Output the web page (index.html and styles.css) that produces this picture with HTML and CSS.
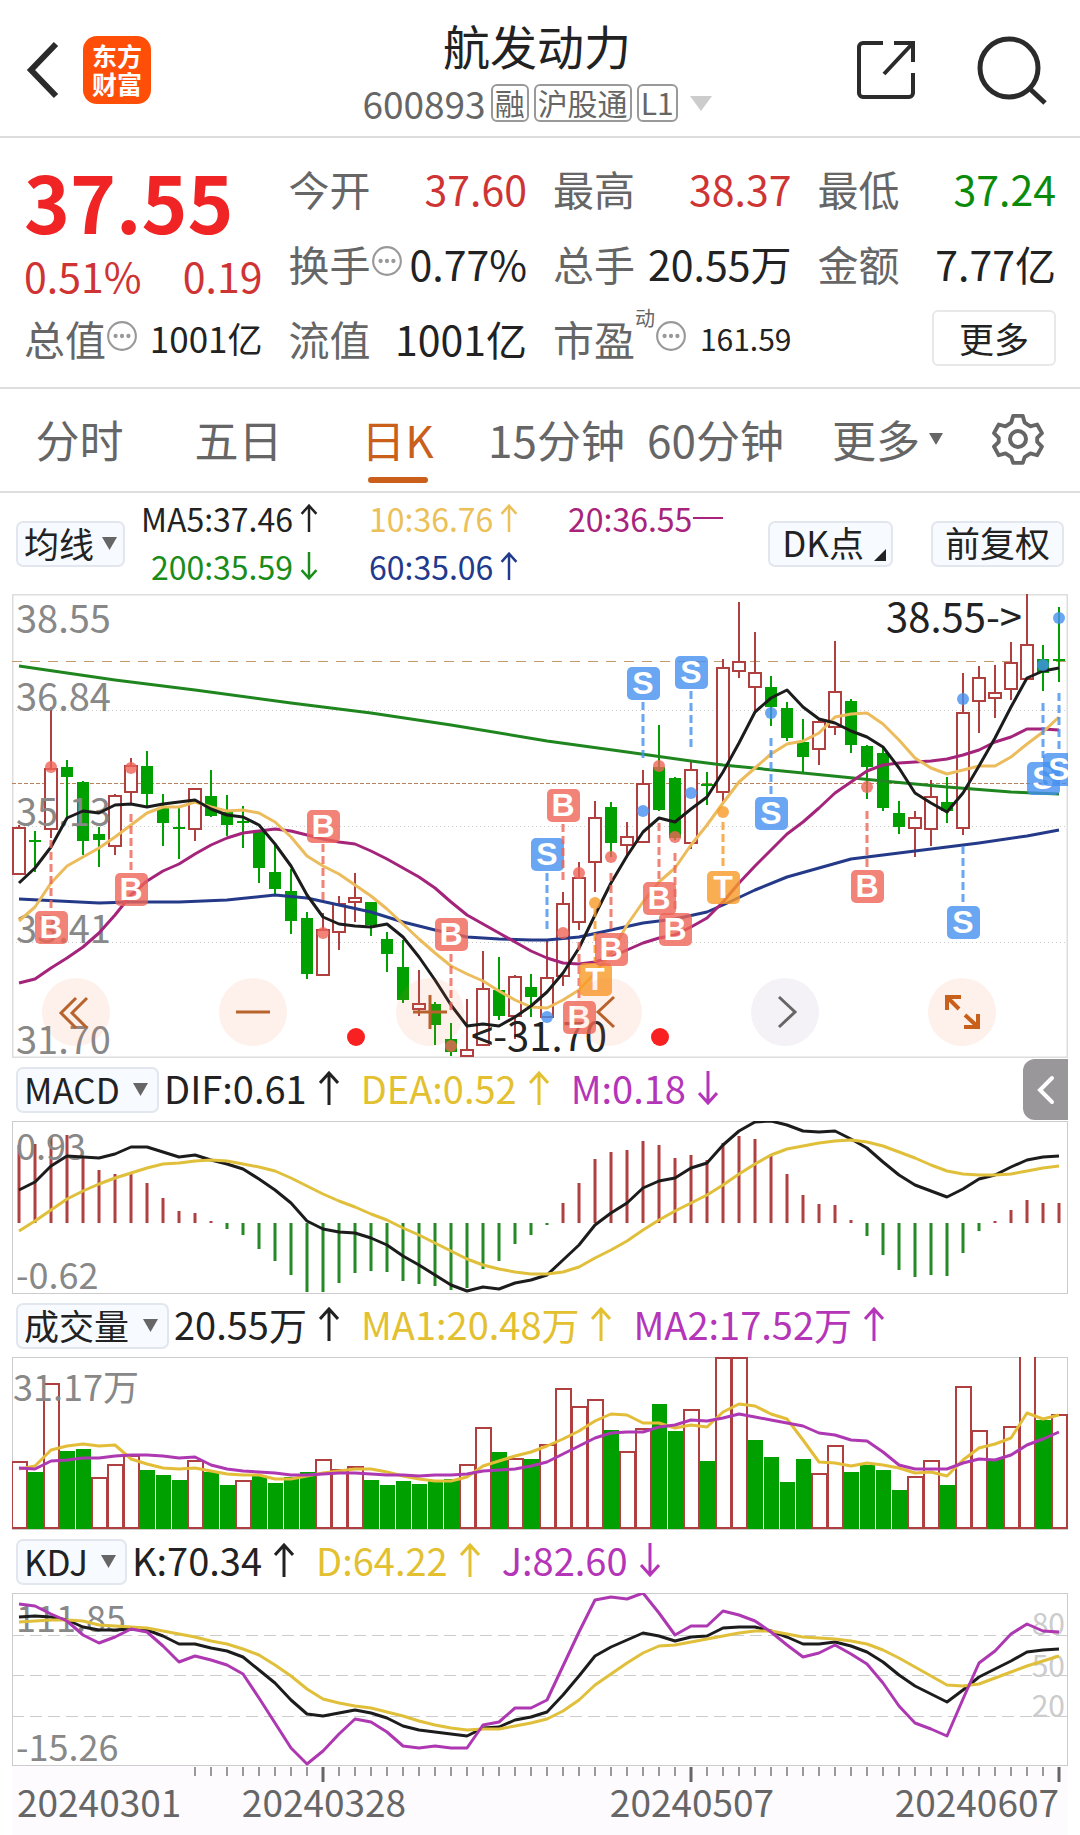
FILE: index.html
```html
<!DOCTYPE html>
<html lang="zh-CN">
  <head>
    <meta charset="UTF-8" />
    <meta name="viewport" content="width=device-width, initial-scale=1.0" />
    <title>航发动力 600893</title>
    <link rel="stylesheet" href="styles.css">
  </head>
  <body>
    <header class="topbar">
      <div class="topbar-left">
        <a class="icon-link" href="#" aria-label="返回">
          <svg width="34" height="58" viewBox="0 0 34 58"><path d="M30 3 5 29l25 26" fill="none" stroke="#2b2b2b" stroke-width="6" /></svg>
        </a>
        <a class="logo" href="#">东方<br>财富</a>
      </div>
      <div class="topbar-title">
        <h1>航发动力</h1>
        <div class="stock-code">
          <span>600893</span>
          <span class="tag">融</span>
          <span class="tag">沪股通</span>
          <span class="tag">L1</span>
          <svg class="code-arrow" width="22" height="15" viewBox="0 0 22 15"><path d="M0 0h22L11 15z" fill="#ccc" /></svg>
        </div>
      </div>
      <div class="topbar-right">
        <a class="icon-link" href="#" aria-label="分享">
          <svg width="62" height="60" viewBox="0 0 62 60" fill="none" stroke="#2b2b2b" stroke-width="4">
            <path d="M27 3H7a4 4 0 0 0-4 4v46a4 4 0 0 0 4 4h46a4 4 0 0 0 4-4V33M38 3h19v19M57 3 28 34" />
          </svg>
        </a>
        <a class="icon-link" href="#" aria-label="搜索">
          <svg width="72" height="70" viewBox="0 0 72 70" fill="none" stroke="#2b2b2b" stroke-width="5">
            <circle cx="33" cy="33" r="29" /><path d="m53 53 16 15" />
          </svg>
        </a>
      </div>
    </header>

    <section class="quote">
      <div class="price-box">
        <div class="price">37.55</div>
        <div class="change"><span>0.51%</span><span>0.19</span></div>
      </div>
      <div class="cell"><span class="name">今开</span><span class="up">37.60</span></div>
      <div class="cell"><span class="name">最高</span><span class="up">38.37</span></div>
      <div class="cell"><span class="name">最低</span><span class="down">37.24</span></div>
      <div class="cell"><span class="name">换手<svg class="dots" viewBox="0 0 30 30"><use href="#dots" /></svg></span><span>0.77%</span></div>
      <div class="cell"><span class="name">总手</span><span>20.55万</span></div>
      <div class="cell"><span class="name">金额</span><span>7.77亿</span></div>
      <div class="cell"><span class="name">总值<svg class="dots" viewBox="0 0 30 30"><use href="#dots" /></svg></span><span class="medium">1001亿</span></div>
      <div class="cell"><span class="name">流值</span><span>1001亿</span></div>
      <div class="cell"><span class="name">市盈<sup>动</sup><svg class="dots" viewBox="0 0 30 30"><use href="#dots" /></svg></span><span class="small">161.59</span></div>
      <div class="cell cell-more"><button class="more-btn" type="button">更多</button></div>
    </section>

    <nav class="tabs">
      <a href="#">分时</a>
      <a href="#">五日</a>
      <a href="#" class="active">日K</a>
      <a href="#">15分钟</a>
      <a href="#">60分钟</a>
      <button type="button">更多<svg width="14" height="14" viewBox="0 0 14 14"><path d="M0 1h14L7 13z" fill="#666" /></svg></button>
      <button type="button" aria-label="设置">
        <svg width="52" height="54" viewBox="0 0 52 54" fill="none" stroke="#666" stroke-width="4" stroke-linejoin="round">
          <path d="M21 3h10l2 7 6 4 7-2 5 9-5 5v4l5 5-5 9-7-2-6 4-2 6H21l-2-6-6-4-7 2-5-9 5-5v-4l-5-5 5-9 7 2 6-4z" transform="translate(1 1) scale(.96)" />
          <circle cx="26" cy="27" r="8" />
        </svg>
      </button>
    </nav>

    <main>
      <div class="ma-bar">
        <label class="picker"><select aria-label="主图指标"><option>均线</option></select><svg viewBox="0 0 14 14"><use href="#tri" /></svg></label>
        <div class="ma-values">
          <span class="black">MA5:37.46<svg class="arrow"><use href="#arrow-up" /></svg></span>
          <span class="yellow">10:36.76<svg class="arrow"><use href="#arrow-up" /></svg></span>
          <span class="plum">20:36.55<svg class="arrow flat"><use href="#flat" /></svg></span>
          <span class="green">200:35.59<svg class="arrow"><use href="#arrow-down" /></svg></span>
          <span class="blue">60:35.06<svg class="arrow"><use href="#arrow-up" /></svg></span>
        </div>
        <button class="box-btn dk-btn" type="button">DK点<svg width="12" height="12" viewBox="0 0 12 12"><path d="M12 0v12H0z" fill="#222" /></svg></button>
        <button class="box-btn" type="button">前复权</button>
      </div>

      <div class="kline">
        <svg id="klineChart" class="chart" viewBox="0 0 1056 464"></svg>
        <div class="tools">
          <button type="button" aria-label="最左"><svg viewBox="0 0 68 68"><path d="M34 20 19 35l15 15M45 20 30 35l15 15" /></svg></button>
          <button type="button" aria-label="缩小"><svg viewBox="0 0 68 68"><path d="M17 34h34" /></svg></button>
          <button type="button" aria-label="放大"><svg viewBox="0 0 68 68"><path d="M17 34h34M34 17v34" /></svg></button>
          <button type="button" aria-label="左移"><svg viewBox="0 0 68 68"><path d="M40 19 24 34l16 15" /></svg></button>
          <button type="button" aria-label="右移" class="gray"><svg viewBox="0 0 68 68"><path d="m28 19 16 15-16 15" /></svg></button>
          <button type="button" aria-label="全屏" class="full"><svg viewBox="0 0 68 68"><path d="M19 32V19h14M20 20l11 11M50 36v13H36M49 48 37 37" /></svg></button>
        </div>
      </div>

      <div class="indicator-bar">
        <label class="picker"><select aria-label="副图一"><option>MACD</option></select><svg viewBox="0 0 14 14"><use href="#tri" /></svg></label>
        <span class="black">DIF:0.61<svg class="arrow"><use href="#arrow-up" /></svg></span>
        <span class="gold">DEA:0.52<svg class="arrow"><use href="#arrow-up" /></svg></span>
        <span class="purple">M:0.18<svg class="arrow"><use href="#arrow-down" /></svg></span>
        <button class="side-btn" type="button" aria-label="展开"><svg width="18" height="30" viewBox="0 0 18 30"><path d="M15 3 3 15l12 12" fill="none" stroke="#fff" stroke-width="4" stroke-linecap="round" /></svg></button>
      </div>
      <svg id="macdChart" class="chart" viewBox="0 0 1056 173"></svg>

      <div class="indicator-bar">
        <label class="picker"><select aria-label="副图二"><option>成交量</option></select><svg viewBox="0 0 14 14"><use href="#tri" /></svg></label>
        <span class="black">20.55万<svg class="arrow"><use href="#arrow-up" /></svg></span>
        <span class="gold">MA1:20.48万<svg class="arrow"><use href="#arrow-up" /></svg></span>
        <span class="purple">MA2:17.52万<svg class="arrow"><use href="#arrow-up" /></svg></span>
      </div>
      <svg id="volumeChart" class="chart" viewBox="0 0 1056 173"></svg>

      <div class="indicator-bar">
        <label class="picker"><select aria-label="副图三"><option>KDJ</option></select><svg viewBox="0 0 14 14"><use href="#tri" /></svg></label>
        <span class="black">K:70.34<svg class="arrow"><use href="#arrow-up" /></svg></span>
        <span class="gold">D:64.22<svg class="arrow"><use href="#arrow-up" /></svg></span>
        <span class="purple">J:82.60<svg class="arrow"><use href="#arrow-down" /></svg></span>
      </div>
      <svg id="kdjChart" class="chart" viewBox="0 0 1056 173"></svg>
      <svg id="dateAxis" class="chart axis" viewBox="0 0 1056 70"></svg>
    </main>

    <!-- shared icons -->
    <svg class="symbols" aria-hidden="true">
      <symbol id="dots" viewBox="0 0 30 30">
        <circle cx="15" cy="15" r="13" fill="none" stroke="#999" stroke-width="2" />
        <circle cx="9" cy="15" r="2" fill="#999" /><circle cx="15" cy="15" r="2" fill="#999" /><circle cx="21" cy="15" r="2" fill="#999" />
      </symbol>
      <symbol id="tri" viewBox="0 0 14 14"><path d="M0 1h14L7 13z" fill="#666" /></symbol>
      <symbol id="arrow-up" viewBox="0 0 20 34"><path d="M10 34V2M1 12l9-10 9 10" fill="none" stroke="currentColor" stroke-width="3" /></symbol>
      <symbol id="arrow-down" viewBox="0 0 20 34"><path d="M10 0v32M1 22l9 10 9-10" fill="none" stroke="currentColor" stroke-width="3" /></symbol>
      <symbol id="flat" viewBox="0 0 30 28"><path d="M0 14h30" stroke="currentColor" stroke-width="2" /></symbol>
    </svg>

    <script src="charts.js"></script>
  </body>
</html>
```
FILE: styles.css
```css
* {
  box-sizing: border-box;
}

body {
  margin: 0;
  background: #fff;
  color: #222;
  font-family: "Noto Sans CJK SC", sans-serif;
}

a {
  color: inherit;
  text-decoration: none;
}

button,
select {
  margin: 0;
  padding: 0;
  border: none;
  background: none;
  color: inherit;
  font: inherit;
  cursor: pointer;
}

svg {
  flex: none;
}

.symbols {
  position: absolute;
  width: 0;
  height: 0;
}

/* header */
.topbar {
  display: grid;
  grid-template-columns: 1fr auto 1fr;
  height: 138px;
  padding: 0 32px 0 26px;
  border-bottom: 2px solid #ddd;
}

.topbar-left,
.topbar-right {
  display: flex;
  align-items: center;
  padding-top: 4px;
}

.topbar-left {
  gap: 23px;
}

.topbar-right {
  justify-content: flex-end;
  gap: 58px;
}

.icon-link {
  display: flex;
}

.logo {
  width: 68px;
  height: 68px;
  padding: 5px 0;
  border-radius: 14px;
  background: #ff4e08;
  color: #fff;
  font-size: 25px;
  font-weight: 700;
  line-height: 28px;
  text-align: center;
}

.topbar-title {
  display: flex;
  flex-direction: column;
  align-items: center;
  padding-top: 15px;
}

h1 {
  margin: 0;
  font-size: 47px;
  font-weight: 400;
  line-height: 60px;
}

.stock-code {
  display: flex;
  align-items: center;
  gap: 5px;
  color: #666;
  font-size: 37px;
  line-height: 56px;
}

.tag {
  height: 38px;
  padding: 0 2px;
  border: 2px solid #999;
  border-radius: 6px;
  font-size: 30px;
  line-height: 32px;
}

.code-arrow {
  margin-left: 7px;
}

/* quote numbers */
.quote {
  display: grid;
  grid-template-columns: repeat(4, 1fr);
  grid-auto-rows: 75px;
  column-gap: 26px;
  padding: 12px 24px;
  border-bottom: 2px solid #ddd;
}

.price-box {
  grid-row: span 2;
}

.price {
  color: #f02424;
  font-size: 78px;
  font-weight: 700;
  line-height: 100px;
}

.change {
  display: flex;
  justify-content: space-between;
  color: #cf3434;
  font-size: 41px;
  line-height: 50px;
}

.cell {
  display: flex;
  align-items: center;
  justify-content: space-between;
  font-size: 41px;
  white-space: nowrap;
}

.name {
  display: flex;
  align-items: center;
  color: #666;
}

.name sup {
  align-self: flex-start;
  font-size: 20px;
  line-height: 20px;
}

.dots {
  width: 32px;
  height: 32px;
  margin-bottom: 4px;
}

.up {
  color: #cf3434;
}

.down {
  color: #0a8c0a;
}

.medium {
  font-size: 35px;
}

.small {
  font-size: 30px;
}

.cell-more {
  justify-content: flex-end;
}

.more-btn {
  width: 124px;
  height: 56px;
  border: 2px solid #e8e8e8;
  border-radius: 6px;
  font-size: 35px;
  line-height: 46px;
}

/* period tabs */
.tabs {
  display: grid;
  grid-template-columns: repeat(5, 159fr) 185fr 76fr;
  height: 104px;
  padding-right: 24px;
  border-bottom: 2px solid #ddd;
  color: #666;
  font-size: 44px;
}

.tabs a,
.tabs button {
  display: flex;
  align-items: center;
  justify-content: center;
  gap: 9px;
  padding-bottom: 2px;
  white-space: nowrap;
}

.tabs .active {
  position: relative;
  color: #c95f1b;
}

.tabs .active::after {
  content: "";
  position: absolute;
  bottom: 8px;
  width: 60px;
  height: 6px;
  border-radius: 3px;
  background: #c95f1b;
}

/* moving averages */
main {
  padding: 0 12px;
}

.ma-bar {
  display: flex;
  align-items: center;
  height: 101px;
  padding: 0 4px;
}

.picker,
.box-btn {
  display: flex;
  align-items: center;
  height: 46px;
  border: 2px solid #e2e6ee;
  border-radius: 7px;
  background: #f7faff;
  font-size: 35px;
  line-height: 40px;
  white-space: nowrap;
}

.picker {
  gap: 7px;
  padding: 0 6px;
}

.picker select {
  height: 42px;
  padding-bottom: 4px;
  appearance: none;
}

.picker svg {
  width: 15px;
  height: 15px;
}

.ma-values {
  display: grid;
  grid-template-columns: 179px 148px auto;
  column-gap: 51px;
  flex: 1;
  padding: 0 0 4px 14px;
  font-size: 32px;
  line-height: 48px;
}

.ma-values span {
  display: flex;
  align-items: center;
  gap: 7px;
}

.ma-values .black,
.ma-values .green {
  justify-content: flex-end;
}

.ma-values .arrow {
  width: 18px;
  height: 28px;
}

.ma-values .flat {
  width: 30px;
  margin-left: -6px;
}

.box-btn {
  padding: 0 12px 4px;
}

.dk-btn {
  gap: 10px;
  margin-right: 38px;
  padding-right: 5px;
}

.dk-btn svg {
  align-self: flex-end;
}

.black {
  color: #222;
}

.yellow {
  color: #ecc058;
}

.plum {
  color: #a8237c;
}

.green {
  color: #1a8c1a;
}

.blue {
  color: #223a8c;
}

.gold {
  color: #e3c02f;
}

.purple {
  color: #b435b8;
}

/* charts */
.chart {
  display: block;
  width: 100%;
  height: auto;
}

.chart text {
  fill: #888;
  font-size: 36px;
}

.chart .level {
  fill: #ccc;
  font-size: 30px;
  text-anchor: end;
}

.axis {
  background: #fdfbfe;
}

.axis text {
  fill: #666;
  font-size: 37px;
}

.kline {
  position: relative;
}

.kline .chart text {
  font-size: 38px;
}

.kline .chart .note {
  fill: #222;
  font-size: 40px;
}

.kline .chart .badge-letter {
  fill: #fff;
  font-family: "Liberation Sans", Arial, sans-serif;
  font-size: 32px;
  font-weight: 700;
  text-anchor: middle;
}

.tools {
  position: absolute;
  right: 0;
  bottom: 12px;
  left: 0;
  display: flex;
  justify-content: space-between;
  padding: 0 72px 0 30px;
}

.tools button {
  width: 68px;
  height: 68px;
  border-radius: 50%;
  background: rgba(250, 120, 70, 0.1);
}

.tools svg {
  display: block;
  fill: none;
  stroke: #b8622c;
  stroke-width: 3;
}

.tools .full svg {
  stroke: #c8601c;
  stroke-width: 4;
}

.tools .gray {
  background: #f5f2f7;
}

.tools .gray svg {
  stroke: #666;
}

.indicator-bar {
  display: flex;
  align-items: center;
  height: 63px;
  padding-left: 4px;
  font-size: 38px;
}

.indicator-bar .picker {
  gap: 13px;
  margin-right: 5px;
  padding-right: 9px;
}

.indicator-bar span {
  display: flex;
  align-items: center;
  gap: 12px;
  margin-right: 22px;
  padding-bottom: 4px;
}

.indicator-bar .arrow {
  width: 20px;
  height: 34px;
}

.side-btn {
  display: flex;
  align-items: center;
  justify-content: center;
  width: 45px;
  height: 61px;
  margin-left: auto;
  border-radius: 12px 0 0 12px;
  background: #999799;
}
```
FILE: charts.js
```js
const RED = "#b04040";
const GREEN = "#00a000";
const STEP = 16;

// color, high, body top, body bottom, low
const candles = [
  ["r", 231, 234, 280, 280], ["g", 237, 246, 247, 278], ["r", 113, 175, 235, 244], ["g", 166, 173, 183, 226],
  ["g", 187, 188, 247, 261], ["g", 233, 240, 246, 273], ["r", 200, 202, 252, 261], ["r", 164, 172, 198, 209],
  ["g", 157, 172, 200, 213], ["g", 200, 214, 229, 252], ["g", 214, 233, 234, 265], ["r", 194, 195, 235, 247],
  ["g", 176, 202, 222, 223], ["g", 201, 218, 231, 242], ["g", 212, 227, 228, 254], ["g", 236, 237, 274, 289],
  ["g", 249, 278, 295, 300], ["g", 275, 297, 327, 340], ["g", 318, 324, 380, 385], ["r", 319, 336, 381, 382],
  ["r", 302, 310, 338, 356], ["r", 279, 304, 308, 328], ["g", 308, 308, 331, 342], ["g", 338, 345, 360, 378],
  ["g", 346, 373, 406, 409], ["r", 376, 410, 415, 422], ["g", 408, 410, 431, 451], ["g", 429, 445, 458, 462],
  ["r", 405, 456, 462, 463], ["r", 357, 395, 451, 451], ["g", 363, 396, 422, 426], ["r", 381, 383, 422, 445],
  ["g", 380, 393, 403, 423], ["r", 347, 384, 423, 423], ["r", 298, 310, 382, 392], ["r", 268, 284, 328, 336],
  ["r", 207, 224, 268, 298], ["g", 208, 213, 249, 263], ["r", 228, 243, 251, 262], ["r", 176, 190, 248, 249],
  ["g", 131, 173, 216, 217], ["g", 183, 184, 244, 246], ["r", 168, 176, 249, 255], ["g", 178, 190, 191, 211],
  ["r", 65, 74, 198, 209], ["r", 8, 68, 77, 84], ["r", 38, 79, 93, 119], ["g", 82, 93, 113, 132],
  ["g", 108, 114, 144, 147], ["g", 125, 148, 163, 179], ["r", 126, 128, 155, 171], ["r", 47, 98, 133, 141],
  ["g", 105, 107, 151, 159], ["g", 151, 152, 173, 205], ["g", 154, 159, 214, 217], ["g", 207, 219, 233, 240],
  ["r", 217, 224, 234, 263], ["r", 186, 203, 235, 252], ["g", 183, 208, 217, 229], ["r", 79, 119, 234, 241],
  ["r", 72, 84, 107, 139], ["r", 71, 99, 104, 124], ["r", 48, 69, 95, 106], ["r", 0, 51, 85, 85],
  ["g", 51, 65, 79, 97], ["g", 13, 65, 67, 88],
];

const ma5 = [289, 274, 253, 224, 217, 219, 211, 210, 213, 210, 208, 206, 215, 221, 223, 231, 250, 272, 301, 323, 330, 332, 333, 330, 343, 363, 386, 411, 432, 430, 432, 423, 412, 398, 379, 354, 321, 289, 262, 238, 224, 228, 215, 203, 178, 149, 118, 104, 96, 113, 125, 129, 137, 143, 153, 174, 199, 209, 218, 199, 172, 144, 113, 84, 77, 74];
const ma10 = [327, 313, 289, 272, 263, 254, 243, 231, 219, 213, 213, 208, 213, 217, 216, 219, 228, 243, 262, 272, 280, 291, 302, 315, 330, 345, 359, 372, 380, 387, 397, 406, 413, 414, 406, 396, 379, 359, 331, 308, 288, 274, 251, 231, 209, 188, 174, 160, 150, 147, 139, 123, 120, 119, 130, 146, 164, 174, 180, 176, 172, 172, 163, 150, 138, 123];
const ma20 = [389, 385, 374, 364, 353, 339, 321, 301, 287, 277, 270, 260, 251, 244, 239, 237, 235, 237, 241, 245, 248, 250, 257, 265, 274, 283, 294, 308, 321, 330, 339, 348, 357, 364, 369, 370, 368, 363, 356, 349, 344, 341, 333, 324, 308, 289, 272, 256, 240, 228, 214, 199, 188, 177, 171, 169, 168, 167, 165, 161, 156, 148, 143, 135, 135, 136];
// slow averages: [index, y]
const ma60 = [[0, 305], [5, 309], [7, 308], [10, 308], [13, 306], [16, 301], [18, 304], [20, 311], [22, 318], [24, 328], [26, 336], [28, 343], [30, 345], [32, 346], [33, 346], [35, 343], [37, 336], [39, 329], [41, 325], [43, 318], [44, 311], [46, 296], [48, 283], [50, 274], [52, 265], [54, 261], [56, 257], [58, 253], [60, 249], [63, 242], [65, 236]];
const ma200 = [[0, 72], [6, 86], [11, 96], [17, 109], [22, 119], [27, 131], [33, 147], [38, 158], [42, 167], [44, 171], [49, 179], [54, 187], [58, 193], [62, 198], [65, 200]];

// letter, index, badge y, dash start, dash end, dot y
const trades = [
  ["B", 2, 333, 246, 314, 173], ["B", 7, 295, 220, 276, 174], ["B", 19, 232, 250, 308, 339], ["B", 27, 340, 360, 416, 452],
  ["S", 33, 260, 279, 335, 423], ["B", 34, 211, 230, 286, 339], ["B", 35, 423, 348, 404, 279], ["T", 36, 385, 315, 368, 309],
  ["B", 37, 355, 279, 336, 263], ["S", 39, 89, 108, 164, 217], ["B", 40, 304, 229, 285, 172], ["B", 41, 335, 259, 316, 243],
  ["S", 42, 78, 97, 153, 199], ["T", 44, 293, 228, 274, 218], ["S", 47, 219, 144, 200, 119], ["B", 53, 292, 217, 273, 193],
  ["S", 59, 328, 252, 309, 105], ["S", 64, 184, 109, 164, 71], ["S", 65, 175, 99, 156, 24],
];
const tradeColors = { B: "#ee6558", S: "#4590f0", T: "#fa9a28" };

const macdBars = [24, 23, 16, 14, 35, 49, 53, 53, 62, 77, 90, 92, 100, 108, 114, 128, 140, 154, 171, 171, 162, 152, 150, 151, 160, 163, 165, 169, 167, 148, 140, 123, 114, 104, 82, 62, 38, 31, 29, 20, 24, 37, 34, 39, 22, 15, 18, 33, 53, 74, 83, 84, 99, 115, 134, 149, 156, 154, 155, 132, 110, 100, 89, 79, 82, 82];
const dif = [69, 61, 45, 35, 36, 37, 33, 26, 26, 31, 36, 34, 39, 43, 48, 58, 69, 82, 100, 108, 111, 112, 117, 124, 135, 144, 154, 164, 170, 166, 168, 162, 159, 154, 139, 124, 104, 92, 82, 67, 60, 57, 47, 42, 24, 10, 1, 0, 4, 10, 11, 10, 18, 27, 41, 54, 64, 70, 76, 68, 58, 54, 46, 39, 36, 35];
const dea = [110, 100, 89, 78, 70, 63, 57, 52, 47, 43, 42, 40, 39, 40, 43, 46, 50, 57, 65, 73, 80, 86, 93, 99, 107, 114, 122, 130, 138, 144, 148, 151, 153, 153, 151, 146, 137, 129, 120, 109, 99, 90, 82, 74, 64, 53, 43, 34, 28, 25, 22, 20, 19, 21, 25, 31, 37, 44, 50, 53, 54, 54, 53, 50, 47, 45];

const volumeColors = "rgrggrrrgggrggrggggrrrggggggrrgrgrrrrgrrggrgrrggggrrggggrrgrrgrrgr";
const volumes = [105, 115, 27, 94, 92, 121, 108, 99, 113, 118, 123, 104, 115, 128, 124, 119, 126, 120, 115, 103, 113, 110, 123, 128, 124, 127, 123, 122, 108, 71, 95, 102, 102, 88, 32, 50, 43, 73, 95, 72, 47, 74, 53, 104, 1, 1, 83, 100, 125, 102, 117, 89, 115, 108, 113, 133, 120, 104, 128, 30, 74, 102, 70, -5, 63, 58];
const volMa1 = [112, 109, 93, 89, 87, 89, 88, 102, 107, 111, 112, 111, 114, 117, 118, 118, 122, 122, 119, 116, 114, 112, 112, 115, 119, 122, 124, 124, 120, 109, 104, 99, 95, 89, 82, 74, 64, 57, 58, 66, 66, 71, 68, 70, 55, 47, 49, 57, 62, 83, 105, 106, 109, 106, 108, 111, 116, 115, 119, 103, 91, 87, 81, 56, 62, 58];
const volMa2 = [111, 112, 104, 103, 101, 101, 99, 98, 98, 99, 101, 100, 108, 112, 114, 115, 116, 118, 118, 117, 116, 116, 117, 118, 118, 119, 118, 118, 117, 114, 113, 112, 109, 105, 97, 89, 81, 76, 75, 75, 70, 68, 63, 64, 61, 57, 60, 63, 66, 69, 76, 78, 83, 84, 95, 108, 112, 112, 112, 106, 102, 103, 98, 88, 82, 75];

const kLine = [24, 23, 24, 27, 34, 37, 37, 36, 37, 43, 51, 51, 55, 58, 64, 77, 90, 107, 121, 123, 120, 117, 120, 125, 133, 137, 139, 141, 143, 135, 134, 127, 124, 119, 102, 83, 63, 54, 47, 40, 43, 48, 44, 43, 35, 34, 34, 38, 44, 51, 51, 49, 53, 59, 69, 82, 93, 101, 109, 97, 84, 76, 68, 59, 57, 56];
const dLine = [29, 28, 27, 27, 28, 32, 33, 34, 35, 38, 41, 44, 48, 51, 56, 62, 72, 83, 96, 106, 110, 113, 115, 119, 123, 128, 132, 135, 137, 136, 136, 133, 130, 126, 118, 107, 92, 81, 70, 60, 53, 52, 49, 46, 43, 40, 38, 38, 41, 44, 45, 46, 48, 51, 57, 65, 74, 83, 92, 93, 91, 85, 79, 73, 68, 63];
const jLine = [11, 13, 21, 28, 42, 50, 44, 36, 39, 53, 69, 63, 67, 72, 81, 105, 130, 155, 171, 158, 141, 126, 129, 139, 153, 155, 153, 155, 155, 132, 129, 115, 115, 107, 73, 39, 7, 4, 6, 0, 20, 42, 33, 33, 18, 22, 28, 39, 52, 64, 60, 52, 61, 71, 90, 113, 130, 136, 143, 106, 70, 58, 41, 31, 38, 39];

const x = (i) => 7 + STEP * i;

function line(data, color, width = 3) {
  const points = data.map((d, i) => (Array.isArray(d) ? `${x(d[0])},${d[1]}` : `${x(i)},${d}`)).join(" ");
  return `<polyline points="${points}" fill="none" stroke="${color}" stroke-width="${width}" stroke-linejoin="round" />`;
}

function hline(y, color, dash) {
  return `<path d="M0 ${y}.5H1056" stroke="${color}" stroke-width="1" stroke-dasharray="${dash}" />`;
}

function vline(cx, y1, y2, color, width) {
  return `<path d="M${cx} ${y1}V${y2}" stroke="${color}" stroke-width="${width}" />`;
}

function frame(height, color, width = 1) {
  return `<rect x="0.5" y="0.5" width="1055" height="${height}" fill="none" stroke="${color}" stroke-width="${width}" />`;
}

function label(text, tx, ty, cls = "") {
  return `<text class="${cls}" x="${tx}" y="${ty}">${text}</text>`;
}

function drawKline() {
  let out = frame(463, "#ddd", 2);
  [116, 232, 348].forEach((y) => (out += hline(y, "#ccc", "1 3")));
  out += hline(67, "#c49a6c", "10 8") + hline(189, "#b8835c", "4 2");

  candles.forEach(([c, high, top, bottom, low], i) => {
    const cx = x(i);
    if (c === "r") {
      out += vline(cx, high, top, RED, 2) + vline(cx, bottom, low, RED, 2);
      out += `<rect x="${cx - 6}" y="${top}" width="12" height="${Math.max(bottom - top, 2)}" fill="#fff" stroke="${RED}" stroke-width="2" />`;
    } else {
      out += vline(cx, high, low, GREEN, 2);
      out += `<rect x="${cx - 6}" y="${top}" width="12" height="${Math.max(bottom - top, 2)}" fill="${GREEN}" />`;
    }
  });

  out += label("38.55", 4, 39) + label("36.84", 4, 117) + label("35.13", 4, 232) + label("33.41", 4, 349) + label("31.70", 4, 460);
  out += line(ma200, "#1f861f") + line(ma60, "#243a88") + line(ma20, "#a3247a") + line(ma10, "#ecbc5c") + line(ma5, "#1c1c1c");
  out += '<circle cx="344" cy="443" r="9" fill="#f82020" /><circle cx="648" cy="443" r="9" fill="#f82020" />';
  out += label("&lt;-31.70", 459, 457, "note") + label("38.55-&gt;", 874, 38, "note");

  trades.forEach(([type, i, y, from, to, dot]) => {
    const color = tradeColors[type];
    const cx = x(i);
    out += `<g opacity="0.8"><circle cx="${cx}" cy="${dot}" r="6" fill="${color}" />`;
    out += `<path d="M${cx} ${from}V${to}" stroke="${color}" stroke-width="3" stroke-dasharray="8 4" />`;
    out += `<rect x="${cx - 16}" y="${y - 16}" width="33" height="33" rx="5" fill="${color}" /></g>`;
    out += label(type, cx, y + 11, "badge-letter");
  });
  document.getElementById("klineChart").innerHTML = out;
}

function drawMacd() {
  let out = frame(172, "#ccc");
  macdBars.forEach((y, i) => (out += vline(x(i), y, 102, y < 102 ? RED : "#258a25", 3)));
  out += label("0.93", 4, 39) + label("-0.62", 4, 168);
  out += line(dif, "#1c1c1c") + line(dea, "#e0bf3a");
  document.getElementById("macdChart").innerHTML = out;
}

function drawVolume() {
  let out = frame(172, "#ccc");
  volumes.forEach((y, i) => {
    const cx = x(i);
    out += volumeColors[i] === "r"
      ? `<rect x="${cx - 7}" y="${y}" width="15" height="${171 - y}" fill="#fff" stroke="${RED}" stroke-width="2" />`
      : `<rect x="${cx - 7}" y="${y}" width="15" height="${172 - y}" fill="${GREEN}" />`;
  });
  out += label("31.17万", 1, 44);
  out += line(volMa1, "#e3bd38") + line(volMa2, "#ad38b2");
  document.getElementById("volumeChart").innerHTML = out;
}

function drawKdj() {
  let out = frame(172, "#ccc");
  [42, 82, 123].forEach((y) => (out += hline(y, "#ccc", "12 6")));
  out += label("80", 1053, 42, "level") + label("50", 1053, 84, "level") + label("20", 1053, 124, "level");
  out += label("111.85", 4, 39) + label("-15.26", 4, 168);
  out += line(kLine, "#1c1c1c") + line(dLine, "#e0bf3a") + line(jLine, "#ad38b2");
  document.getElementById("kdjChart").innerHTML = out;
}

function drawAxis() {
  let out = "";
  for (let i = 11; i <= 65; i++) {
    const major = i === 19 || i === 42 || i === 65;
    out += vline(x(i), 1, major ? 16 : 10, major ? "#666" : "#999", major ? 3 : 2);
  }
  [["20240301", 5, "start"], ["20240328", 312, "middle"], ["20240507", 680, "middle"], ["20240607", 1047, "end"]].forEach(([d, tx, anchor]) => {
    out += `<text x="${tx}" y="51" text-anchor="${anchor}">${d}</text>`;
  });
  document.getElementById("dateAxis").innerHTML = out;
}

drawKline();
drawMacd();
drawVolume();
drawKdj();
drawAxis();
```
